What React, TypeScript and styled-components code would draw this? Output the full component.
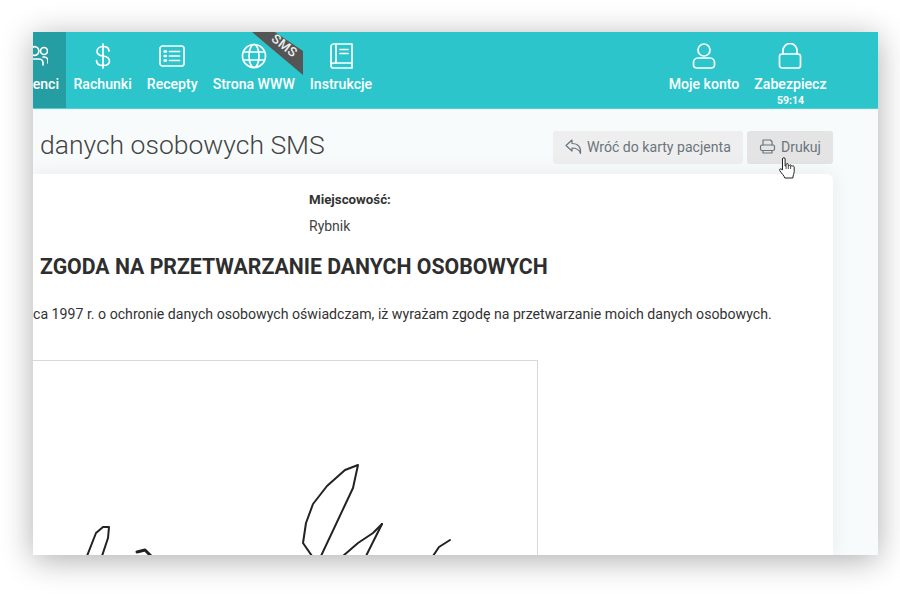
import * as React from 'react';
import styled, { createGlobalStyle } from 'styled-components';

const GlobalStyle = createGlobalStyle`
  html, body {
    margin: 0;
    padding: 0;
    background: #fff;
    font-family: Roboto, "Liberation Sans", sans-serif;
  }
`;

const Stage = styled.div`
  width: 900px;
  height: 600px;
  padding: 32px 22px 45px 33px;
  box-sizing: border-box;
  overflow: hidden;
`;

const Window = styled.div`
  position: relative;
  height: 523px;
  display: flex;
  flex-direction: column;
  overflow: hidden;
  background: #f7fbfc;
`;

const WindowShadow = styled.div`
  height: 523px;
  box-shadow: 0 5px 30px rgba(0, 0, 0, 0.32);
`;

const Header = styled.header`
  flex: none;
  height: 77px;
  display: flex;
  padding-right: 44px;
  background: #2dc5cc;
  border-bottom: 1px solid #4fd0d6;
  box-sizing: border-box;
`;

const NavItem = styled.div<{ $active?: boolean }>`
  display: flex;
  flex-direction: column;
  align-items: ${(p) => (p.$active ? 'flex-end' : 'center')};
  width: ${(p) => (p.$active ? '33px' : 'auto')};
  padding: 11px ${(p) => (p.$active ? '7px' : '7.5px')} 0 ${(p) => (p.$active ? '0' : '7.5px')};
  box-sizing: ${(p) => (p.$active ? 'border-box' : 'content-box')};
  overflow: hidden;
  background: ${(p) => (p.$active ? '#259ea3' : 'transparent')};
  color: #fff;
`;

const NavIcon = styled.svg`
  display: block;
  flex: none;
  width: 26px;
  height: 26px;
  fill: none;
  stroke: #fff;
  stroke-width: 1.7;
  stroke-linecap: round;
  stroke-linejoin: round;
`;

const ClippedIcon = styled(NavIcon)`
  margin-right: 11px;
`;

const NavLabel = styled.div`
  margin-top: 6px;
  font-size: 14.1px;
  line-height: 19px;
  font-weight: 500;
  white-space: nowrap;
`;

const Timer = styled.div`
  margin-top: 1px;
  font-size: 10.5px;
  line-height: 12px;
  font-weight: 700;
`;

const Spacer = styled.div`
  flex: 1;
`;

const Ribbon = styled.div`
  position: absolute;
  left: 219px;
  top: 0;
  width: 51px;
  height: 43px;
  background: #555;
  clip-path: polygon(0 0, 23px 0, 51px 19px, 51px 43px);
`;

const RibbonText = styled.span`
  position: absolute;
  left: 18px;
  top: 7px;
  font-size: 13px;
  line-height: 14px;
  font-weight: 500;
  letter-spacing: 0.5px;
  color: #eee;
  transform: rotate(38deg);
`;

const Main = styled.main`
  flex: 1;
  min-height: 0;
  display: flex;
  flex-direction: column;
  padding: 22px 45px 0 0;
`;

const TitleRow = styled.div`
  display: flex;
  align-items: center;
  justify-content: space-between;
  height: 33px;
  padding-left: 7px;
`;

const Title = styled.h1`
  margin: 0 0 5px;
  font-size: 26.5px;
  line-height: 32px;
  font-weight: 300;
  color: #444;
  white-space: nowrap;
`;

const Buttons = styled.div`
  display: flex;
  gap: 4px;
`;

const Button = styled.div<{ $hover?: boolean }>`
  height: 33px;
  display: flex;
  align-items: center;
  gap: 5px;
  padding: 0 12px 2px;
  box-sizing: border-box;
  border-radius: 3px;
  background: ${(p) => (p.$hover ? '#e4e4e4' : '#eeeeee')};
  color: #6c757d;
  font-size: 14.1px;
  font-weight: 400;
  white-space: nowrap;
`;

const ButtonIcon = styled.svg`
  flex: none;
  width: 17px;
  height: 17px;
  fill: none;
  stroke: #6c757d;
  stroke-width: 1.2;
  stroke-linecap: round;
  stroke-linejoin: round;
`;

const Cursor = styled.svg`
  position: absolute;
  left: 746px;
  top: 125px;
  width: 16px;
  height: 22px;
`;

const Card = styled.section`
  flex: 1;
  margin-top: 10px;
  border-radius: 0 6px 0 0;
  background: #fff;
  box-shadow: 0 0 20px rgba(0, 0, 0, 0.07);
  color: #333;
  overflow: hidden;
`;

const Place = styled.div`
  padding: 17px 0 0 276px;
`;

const PlaceLabel = styled.div`
  font-size: 13.3px;
  line-height: 18px;
  font-weight: 700;
`;

const PlaceValue = styled.div`
  margin-top: 8px;
  font-size: 14px;
  line-height: 18px;
  color: #444;
`;

const ConsentTitle = styled.h2`
  margin: 20px 0 0 7px;
  font-size: 21.25px;
  line-height: 24px;
  font-weight: 700;
  color: #2e2e2e;
`;

const ConsentText = styled.p`
  margin: 25px 0 0;
  font-size: 14.15px;
  line-height: 20px;
  color: #333;
  white-space: nowrap;
`;

const SignatureBox = styled.div`
  width: 505px;
  height: 300px;
  margin-top: 36px;
  box-sizing: border-box;
  border: 1px solid #d8d8d8;
  border-left: 0;
`;

const Signature = styled.svg`
  display: block;
  width: 504px;
  height: 298px;
  fill: none;
  stroke: #222;
  stroke-width: 2;
  stroke-linejoin: round;
  stroke-linecap: round;
`;

const strokes = [
  '54,195 63,172 70,166 76,166 75,177 69,195 66,215',
  '279,195 270,182 273,162 280,143 294,125 312,109 325,104 320,127 288,195 275,225',
  '349,163 340,172 325,182 310,195 295,210',
  '349,163 333,195 325,220',
  '417,179 406,186 400,195 392,210',
];

export default function App() {
  return (
    <>
      <GlobalStyle />
      <Stage>
        <WindowShadow>
          <Window>
            <Header>
              <NavItem $active>
                <ClippedIcon viewBox="0 0 26 26">
                  <circle cx="12.500" cy="8" r="4.300" />
                  <circle cx="22" cy="8" r="3.500" />
                  <path d="M21 22v-2a4 4 0 0 0-4-4H8a4 4 0 0 0-4 4v2" />
                  <path d="M21 14h1a4 4 0 0 1 4 4v2" />
                </ClippedIcon>
                <NavLabel>enci</NavLabel>
              </NavItem>
              <NavItem>
                <NavIcon viewBox="0 0 26 26">
                  <path d="M13 1v24" />
                  <path d="M19 8c0-3-2.500-4.500-6-4.500S7 5.500 7 8.500s2.500 4 6 4.500 6.500 1.500 6.500 5-3 4.500-6.500 4.500-6.500-1.500-6.500-5" />
                </NavIcon>
                <NavLabel>Rachunki</NavLabel>
              </NavItem>
              <NavItem>
                <NavIcon viewBox="0 0 26 26">
                  <rect x="1" y="3" width="24" height="20" rx="2.500" />
                  <path d="M10.500 8.500h10M10.500 13h10M10.500 17.500h10" />
                  <path d="M5.500 8.500h1.500M5.500 13h1.500M5.500 17.500h1.500" strokeWidth="2.400" />
                </NavIcon>
                <NavLabel>Recepty</NavLabel>
              </NavItem>
              <NavItem>
                <NavIcon viewBox="0 0 26 26">
                  <circle cx="13" cy="13" r="11.500" />
                  <ellipse cx="13" cy="13" rx="5" ry="11.500" />
                  <path d="M2.500 9h21M2.500 17h21" />
                </NavIcon>
                <NavLabel>Strona WWW</NavLabel>
              </NavItem>
              <NavItem>
                <NavIcon viewBox="0 0 26 26">
                  <path d="M3 21V3.500A2.500 2.500 0 0 1 5.500 1H24v19H5.500A2.500 2.500 0 0 0 3 22.500 2.500 2.500 0 0 0 5.500 25H24v-5" />
                  <path d="M8 1v19" />
                  <path d="M12 6.500h8M12 10.500h8" />
                </NavIcon>
                <NavLabel>Instrukcje</NavLabel>
              </NavItem>
              <Spacer />
              <NavItem>
                <NavIcon viewBox="0 0 26 26">
                  <circle cx="13" cy="7" r="6" />
                  <path d="M2.500 22v-2.500a4.500 4.500 0 0 1 4.500-4.500h12a4.500 4.500 0 0 1 4.500 4.500V22a3 3 0 0 1-3 3H5.500a3 3 0 0 1-3-3z" />
                </NavIcon>
                <NavLabel>Moje konto</NavLabel>
              </NavItem>
              <NavItem>
                <NavIcon viewBox="0 0 26 26">
                  <rect x="2.500" y="11" width="21" height="14" rx="2.500" />
                  <path d="M6 11V7.500a7 7 0 0 1 14 0V11" />
                </NavIcon>
                <NavLabel>Zabezpiecz</NavLabel>
                <Timer>59:14</Timer>
              </NavItem>
            </Header>
            <Ribbon>
              <RibbonText>SMS</RibbonText>
            </Ribbon>
            <Main>
              <TitleRow>
                <Title>danych osobowych SMS</Title>
                <Buttons>
                  <Button>
                    <ButtonIcon viewBox="0 0 17 17">
                      <path d="M7 2 1 7.500 7 13v-3c4 0 7 1 8.500 5.500.8-6.500-2.500-10-8.500-10z" />
                    </ButtonIcon>
                    Wróć do karty pacjenta
                  </Button>
                  <Button $hover>
                    <ButtonIcon viewBox="0 0 17 17">
                      <path d="M4 7V2h7.500L13 3.500V7" />
                      <rect x="1.500" y="7" width="14" height="5.500" rx="1.500" />
                      <path d="M4 12.500V15h9v-2.500" />
                    </ButtonIcon>
                    Drukuj
                  </Button>
                </Buttons>
              </TitleRow>
              <Card>
                <Place>
                  <PlaceLabel>Miejscowość:</PlaceLabel>
                  <PlaceValue>Rybnik</PlaceValue>
                </Place>
                <ConsentTitle>ZGODA NA PRZETWARZANIE DANYCH OSOBOWYCH</ConsentTitle>
                <ConsentText>
                  ca 1997 r. o ochronie danych osobowych oświadczam, iż wyrażam zgodę na przetwarzanie moich danych osobowych.
                </ConsentText>
                <SignatureBox>
                  <Signature viewBox="0 0 504 298">
                    {strokes.map((points, i) => (
                      <polyline key={i} points={points} />
                    ))}
                    <polyline points="104,191 112,189 118,195 116,210" strokeWidth="3" />
                  </Signature>
                </SignatureBox>
              </Card>
            </Main>
            <Cursor viewBox="0 0 16 22">
              <path
                d="M3.500 2a1.300 1.300 0 0 1 2.600 0v7l1-.3V7.600c0-1.400 2.200-1.400 2.200 0v1.200l.9-.1c.3-1.100 2.200-1 2.200.3l.8.100c.7-.6 2-.1 2 1v4.400c0 2-1.300 3.500-1.300 6.500H5.800c-.5-2-3-4.500-5-7.300-.9-1.400.8-2.600 2-1.400l.7.800z"
                fill="#fff"
                stroke="#222"
                strokeWidth="1"
                strokeLinejoin="round"
              />
              <path d="M7.100 9v3M9.300 9v3M11.600 9v3" stroke="#222" strokeWidth="0.800" />
            </Cursor>
          </Window>
        </WindowShadow>
      </Stage>
    </>
  );
}
